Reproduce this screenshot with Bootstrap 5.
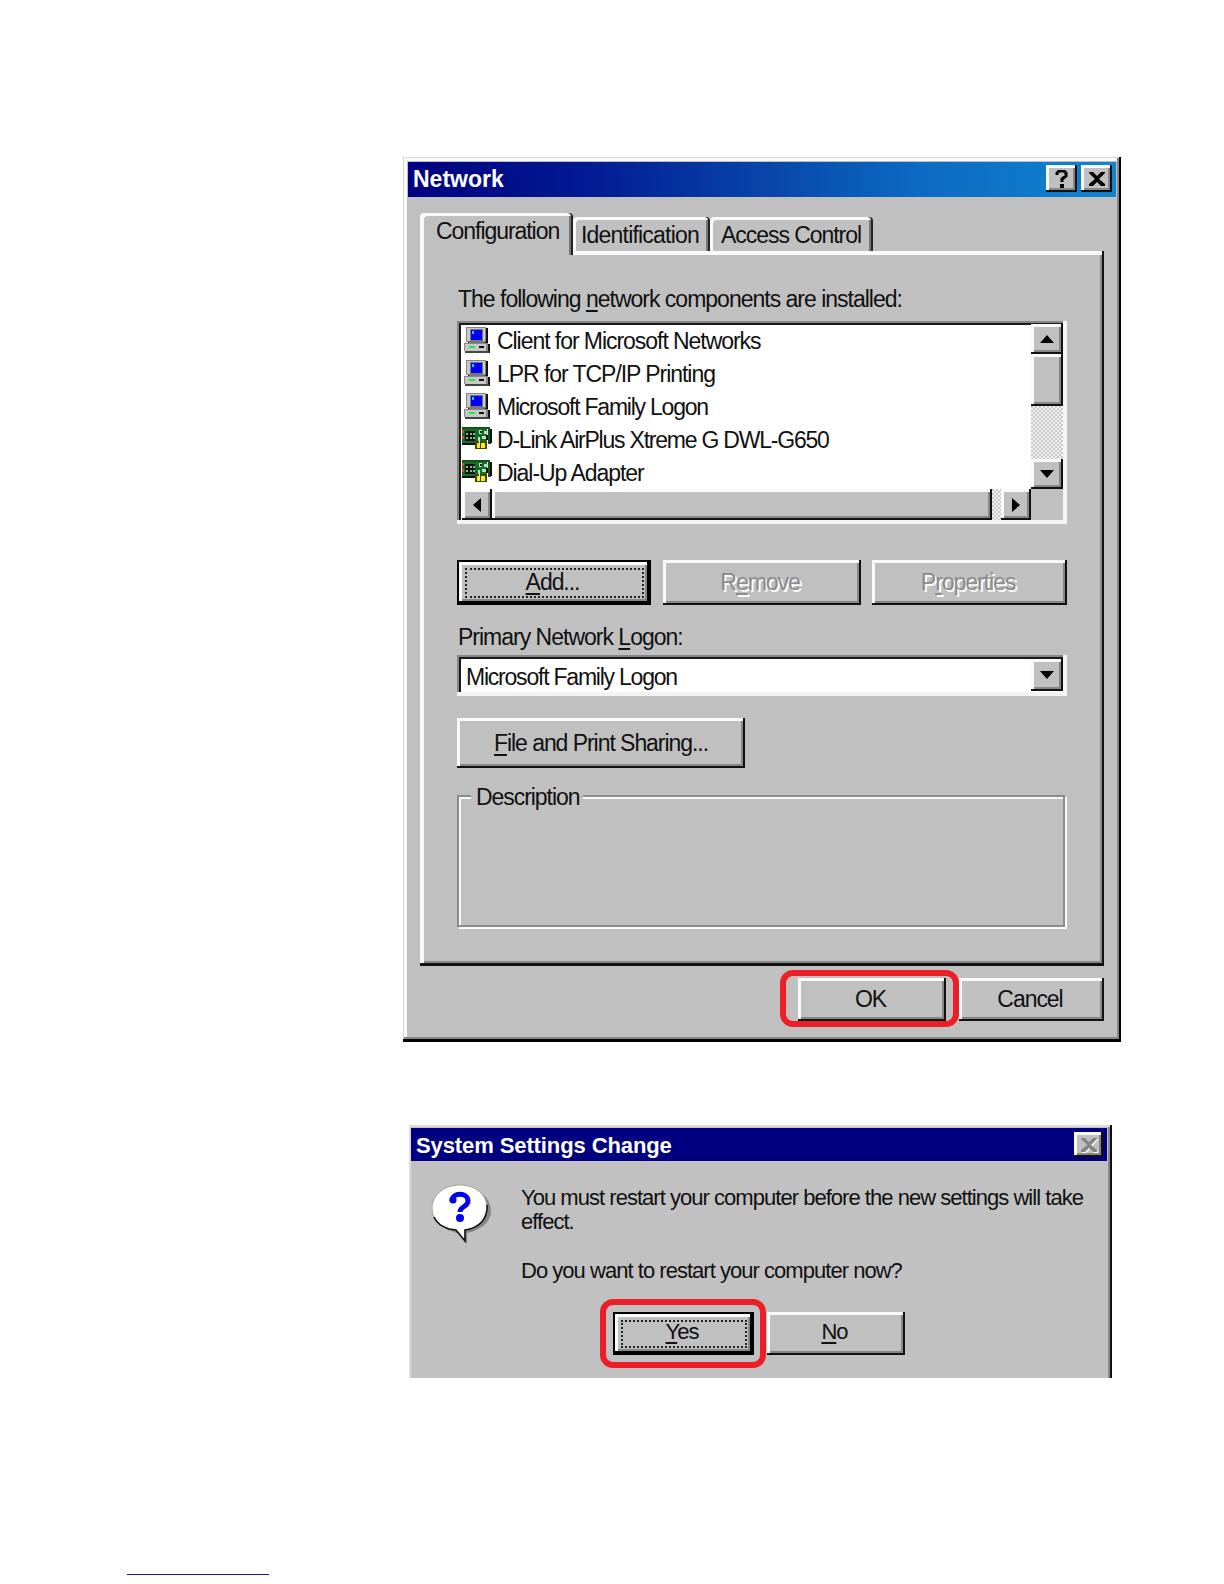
<!DOCTYPE html>
<html lang="en">
<head>
<meta charset="utf-8">
<title>Network</title>
<link href="https://cdn.jsdelivr.net/npm/bootstrap@5.3.0/dist/css/bootstrap.min.css" rel="stylesheet">
<script src="https://cdn.jsdelivr.net/npm/bootstrap@5.3.0/dist/js/bootstrap.bundle.min.js"></script>
<style>
body{background:#fff;width:1224px;height:1584px;overflow:hidden;font-family:"Liberation Sans",Arial,sans-serif;font-size:23px;line-height:26px;letter-spacing:-1.05px;color:#111;white-space:nowrap}
u{text-decoration-thickness:2px;text-underline-offset:3px;text-decoration-skip-ink:none}
.win{background:#c0c0c0}
.netwin{margin:157px 0 0 403px;width:718px;height:885px;padding:5px 5px 0 5px;box-shadow:inset -2px -3px #000,inset 1px 1px #d8d8d8,inset -4px -5px #868686,inset 4px 4px #fafafa}
.titlebar{height:35px;background:linear-gradient(90deg,#000080,#021a93 25%,#0848aa 52%,#0c6ac2 72%,#1084d0);color:#fff;font-weight:700;letter-spacing:0;padding:0 4px 2px 5px}
.face{background:#c0c0c0;color:#111;border:0;padding:0;border-radius:0;font:inherit;letter-spacing:inherit;box-shadow:inset -2px -2px #111,inset 3px 3px #fafafa,inset -4px -4px #868686}
button.face{padding:0 3px 2px 0}
.face.btn:hover,.face.btn:disabled{background:#c0c0c0;border:0;opacity:1}
button.capbtn{width:31px;height:27px;padding:0}
.tabs{margin:16px 0 0 12px}
.tab{background:#c0c0c0;height:34px;padding-top:5px;border-radius:4px 4px 0 0;box-shadow:inset -2px 0 #222,inset 3px 3px #fafafa,inset -4px 0 #777}
.tab-on{height:42px;width:153px;padding-left:16px;margin-bottom:-4px;z-index:2;box-shadow:inset -2px 0 #222,inset 4px 3px #fafafa,inset -4px 0 #777}
.pane{margin-left:12px;width:684px;height:715px;padding:35px 37px 0;box-shadow:inset -2px -3px #111,inset 4px 4px #fafafa,inset -4px -5px #868686}
.cap{padding-left:1px;letter-spacing:-1px}
.sunk{background:#fff;box-shadow:inset -4px -4px #f4f4f4,inset 2px 2px #868686,inset 4px 4px #1a1a1a}
.listbox{height:203px;padding:3px 4px 4px 5px;margin-top:9px}
.item{height:33px;line-height:33px;padding-top:1px}
.item svg{width:35px;height:31px;flex:none}
.snug{letter-spacing:-1.22px}
.dither{background:repeating-conic-gradient(#c8c8c8 0 25%,#f2f2f2 0 50%) 0 0/4px 4px}
.vsb{width:32px;height:165px}
.hsb{height:31px}
.deflt{box-shadow:inset 2px 2px #000,inset -4px -4px #000,inset 5px 5px #fafafa,inset -6px -6px #868686}
.deflt>span{border:2px dotted #222;position:absolute;inset:8px 7px 7px 8px}
.off,.off:disabled{color:#8c8c8c;text-shadow:2px 2px #fff}
.combo{height:41px;margin-top:5px;padding:4px 4px 5px 9px}
.group{height:132px;margin-top:27px;border:2px solid #8c8c8c;box-shadow:inset 2px 2px #fafafa,2px 2px #fafafa;width:608px}
.group span{background:#c0c0c0;margin:-13px 0 0 12px;padding:0 3px 0 5px}
.ring{position:absolute;border:6px solid #ec1f28;border-radius:13px;z-index:3}
.restart{margin:83px 0 0 409px;width:703px;height:253px;padding:3px 5px 0 2px;font-size:22px;line-height:24.2px;letter-spacing:-.97px;box-shadow:inset -2px 0 #111,inset 2px 2px #ddd,inset -4px 0 #8a8a8a;background:#c1c1c1}
.restart .titlebar{height:33px;background:#000080;padding-bottom:0;letter-spacing:-.1px}
.footlink{width:142px;height:1px;margin:196px 0 0 127px;background:#161687}
</style>
</head>
<body>
<svg width="0" height="0" class="position-absolute">
<defs>
<symbol id="pc" viewBox="0 0 36 31"><g shape-rendering="crispEdges">
<path d="M6 3h21v16H6zM5 19h24v9H5z" fill="#111"/>
<path d="M4 2h21v15H4z" fill="#858585"/><path d="M5 3h19v13H5z" fill="#c9c9c9"/>
<path d="M8 4h14v12H8z" fill="#777"/><path d="M9 5h12v10H9z" fill="#0000f5"/><path d="M10 6h2v3h-2z" fill="#00d8ff"/>
<path d="M7 16h17v2H7z" fill="#777"/>
<path d="M2 18h25v8H2z" fill="#c7c7c7"/><path d="M2 18h25v1H2zM2 18h1v8H2zM25 19h2v7h-2z" fill="#888"/><path d="M3 26h25v2H3z" fill="#444"/>
<path d="M7 21h6v2H7z" fill="#25e843"/><path d="M17 21h6v2h-6z" fill="#111"/></g></symbol>
<symbol id="nic" viewBox="0 0 36 31"><g shape-rendering="crispEdges">
<path d="M0 4h26v17H0z" fill="#10702a"/><path d="M0 3h29v2H0zM27 5h3v15h-3z" fill="#175021"/><path d="M29 5h2v14h-2zM0 19h14v2H0z" fill="#111"/>
<path d="M3 7h10v10H3z" fill="#111"/><path d="M4 9h2v2H4zM8 9h2v2H8zM11 9h2v2h-2zM4 13h2v2H4zM8 13h2v2H8zM11 13h2v2h-2z" fill="#8bb98b"/>
<path d="M0 6h2v3H0zM0 12h2v3H0z" fill="#d9492d"/>
<path d="M17 6h4v4h-4zM23 7h4v3h-4zM16 13h3v4h-3zM21 12h4v3h-4z" fill="#bce0bd"/><path d="M19 7h2v2h-2zM25 11h2v5h-2z" fill="#111"/>
<path d="M13 17h13v8H13z" fill="#444800"/><path d="M15 19h4v5h-4zM20 19h4v5h-4z" fill="#f6ed20"/><path d="M17 17h2v2h-2z" fill="#eee"/></g></symbol>
<symbol id="cross" viewBox="0 0 18 16"><path d="M1 1h4l4 4 4-4h4v1l-6 6 6 5v2h-4l-4-4-4 4H1v-2l6-5-6-6z"/></symbol>
</defs>
</svg>

<div class="win netwin">
  <div class="titlebar d-flex align-items-center">
    <span class="me-auto">Network</span>
    <button class="btn face capbtn d-flex align-items-center justify-content-center me-1"><svg width="13" height="18" viewBox="0 0 13 18"><path d="M2 5V3l2-2h5l2 2v3L7 9v3" fill="none" stroke="#000" stroke-width="3"/><path d="M5 14h4v4H5z"/></svg></button>
    <button class="btn face capbtn d-flex align-items-center justify-content-center"><svg width="18" height="16"><use href="#cross"/></svg></button>
  </div>
  <div class="tabs d-flex align-items-start">
    <div class="tab tab-on position-relative">Configuration</div>
    <div class="tab mt-1" style="width:137px;padding-left:8px;letter-spacing:-.8px">Identification</div>
    <div class="tab mt-1" style="width:163px;padding-left:11px">Access Control</div>
  </div>
  <div class="pane">
    <div class="cap">The following <u>n</u>etwork components are installed:</div>
    <div class="sunk listbox">
      <div class="d-flex">
        <div class="flex-grow-1">
          <div class="item d-flex"><svg><use href="#pc"/></svg>Client for Microsoft Networks</div>
          <div class="item d-flex"><svg><use href="#pc"/></svg>LPR for TCP/IP Printing</div>
          <div class="item d-flex snug"><svg><use href="#pc"/></svg>Microsoft Family Logon</div>
          <div class="item d-flex snug"><svg><use href="#nic"/></svg>D-Link AirPlus Xtreme G DWL-G650</div>
          <div class="item d-flex"><svg><use href="#nic"/></svg>Dial-Up Adapter</div>
        </div>
        <div class="vsb dither d-flex flex-column">
          <div class="face d-flex align-items-center justify-content-center" style="height:30px"><svg width="14" height="8"><path d="M0 8l7-8 7 8z"/></svg></div>
          <div class="face" style="height:52px"></div>
          <div class="face mt-auto d-flex align-items-center justify-content-center" style="height:30px"><svg width="14" height="8"><path d="M0 0l7 8 7-8z"/></svg></div>
        </div>
      </div>
      <div class="hsb dither d-flex">
        <div class="face d-flex align-items-center justify-content-center" style="width:30px"><svg width="8" height="14"><path d="M8 0L0 7l8 7z"/></svg></div>
        <div class="face" style="width:500px"></div>
        <div class="face ms-auto d-flex align-items-center justify-content-center" style="width:30px"><svg width="8" height="14"><path d="M0 0l8 7-8 7z"/></svg></div>
        <div class="win" style="width:32px"></div>
      </div>
    </div>
    <div class="d-flex justify-content-between" style="margin-top:36px;height:45px">
      <button class="btn face deflt position-relative" style="width:194px"><span></span><u>A</u>dd...</button>
      <button class="btn face off" style="width:198px" disabled>R<u>e</u>move</button>
      <button class="btn face off" style="width:195px" disabled>P<u>r</u>operties</button>
    </div>
    <div class="cap" style="margin-top:19px">Primary Network <u>L</u>ogon:</div>
    <div class="sunk combo d-flex align-items-center">
      <span class="me-auto snug pt-1">Microsoft Family Logon</span>
      <div class="face d-flex align-items-center justify-content-center h-100" style="width:32px"><svg width="14" height="8"><path d="M0 0l7 8 7-8z"/></svg></div>
    </div>
    <button class="btn face d-block" style="width:288px;height:50px;margin-top:22px;padding:0"><u>F</u>ile and Print Sharing...</button>
    <div class="group d-flex align-items-start"><span>Description</span></div>
  </div>
  <div class="d-flex justify-content-end" style="margin:12px 12px 0 0;height:43px">
    <div class="position-relative d-flex" style="margin-right:13px">
      <button class="btn face" style="width:148px">OK</button>
      <div class="ring" style="inset:-8px -13px -6px -18px"></div>
    </div>
    <button class="btn face" style="width:145px">Cancel</button>
  </div>
</div>

<div class="win restart">
  <div class="titlebar d-flex align-items-center">
    <span class="me-auto pt-1">System Settings Change</span>
    <button class="btn face capbtn d-flex align-items-center justify-content-center" disabled style="width:29px;height:25px"><svg width="18" height="16"><use href="#cross" x="1" y="1" fill="#fff"/><use href="#cross" fill="#858585"/></svg></button>
  </div>
  <div class="d-flex" style="padding:22px 0 0 19px">
    <svg width="64" height="64" viewBox="0 0 64 64" class="flex-none">
      <path d="M34 5C18 5 6 15 6 28c0 10 6 17 15 20l8 3 8 10V50c14-3 24-11 24-22C61 15 49 5 34 5z" fill="#858585"/>
      <path d="M30 2C14 2 2 12 2 25c0 11 7 18 17 21l7 1 9 11V47c14-2 22-11 22-22C57 12 46 2 30 2z" fill="#fff" stroke="#a5a58c" stroke-width="1"/>
      <path d="M57 22c1 14-8 23-22 25v11l-9-11-7-1C10 43 6 39 4 34" fill="none" stroke="#111" stroke-width="1.6"/>
      <path d="M22 18c0-9 16-9 16 0 0 6-8 5-8 11" fill="none" stroke="#0000ee" stroke-width="5"/><circle cx="23" cy="17" r="3.5" fill="#0000ee"/><circle cx="30" cy="35" r="4" fill="#0000ee"/>
    </svg>
    <div style="margin:3px 0 0 27px">You must restart your computer before the new settings will take<br>effect.<br><br>Do you want to restart your computer now?</div>
  </div>
  <div class="d-flex" style="margin:29px 0 0 202px;height:43px">
    <div class="position-relative d-flex" style="margin-right:13px">
      <button class="btn face deflt position-relative" style="width:141px"><span></span><u>Y</u>es</button>
      <div class="ring" style="inset:-13px -12px -13px -13px"></div>
    </div>
    <button class="btn face" style="width:138px"><u>N</u>o</button>
  </div>
</div>
<div class="footlink"></div>
</body>
</html>
